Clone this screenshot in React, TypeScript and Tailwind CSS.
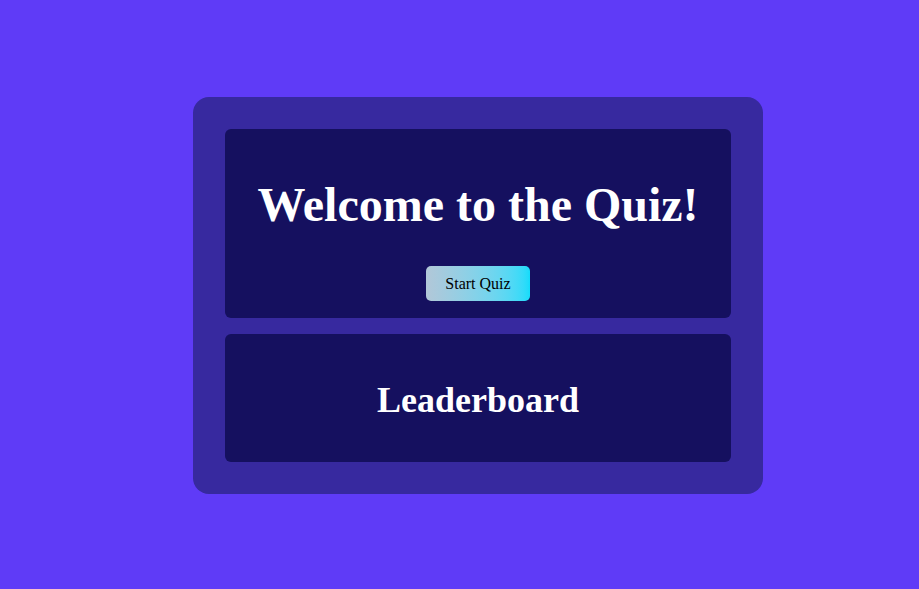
export default function App() {
  return (
    <div
      className="min-h-screen w-full bg-[#5f3bf7] flex items-center"
      style={{ fontFamily: '"Liberation Serif", "Times New Roman", serif' }}
    >
      <div className="ml-[193px] mt-[2px] w-[570px] rounded-2xl bg-[#37299f] p-8 flex flex-col gap-4">
        <section className="h-[189px] rounded-md bg-[#15105f] flex flex-col items-center pt-[52px]">
          <h1 className="text-5xl font-bold text-white">Welcome to the Quiz!</h1>
          <button className="mt-[37px] h-[35px] w-[104px] rounded-[5px] bg-linear-to-r from-[#b2c7d8] to-[#12dcfb] text-base text-black">
            Start Quiz
          </button>
        </section>
        <section className="h-[128px] rounded-md bg-[#15105f] flex justify-center pt-[46px]">
          <h2 className="text-4xl font-bold text-white">Leaderboard</h2>
        </section>
      </div>
    </div>
  );
}
